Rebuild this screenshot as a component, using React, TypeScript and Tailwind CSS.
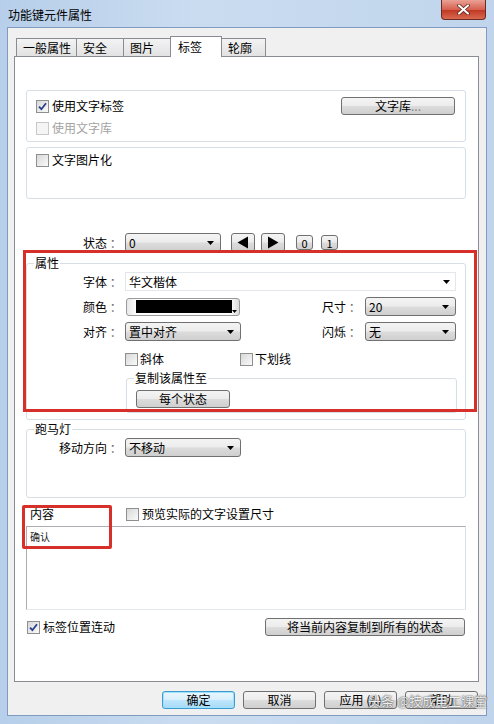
import React from "react";

const btnBg =
  "bg-[linear-gradient(#f4f4f4_0%,#ececec_48%,#dcdcdc_52%,#cfcfcf_100%)]";

const Arrow = () => (
  <svg width="7" height="4" viewBox="0 0 7 4" className="shrink-0">
    <path d="M0 0h7L3.5 4z" fill="#000" />
  </svg>
);

const Check = ({ checked, disabled }: { checked?: boolean; disabled?: boolean }) => (
  <span
    className={`flex h-[13px] w-[13px] shrink-0 items-center justify-center border ${
      disabled
        ? "border-[#c9c9c9] bg-[#f5f5f5]"
        : "border-[#8e8f8f] bg-[linear-gradient(135deg,#d8d8d8,#fafafa)]"
    }`}
  >
    {checked && (
      <svg width="9" height="9" viewBox="0 0 9 9">
        <path d="M1 4.6 L3.4 7.2 L8 1.2" stroke="#283d8c" strokeWidth="1.8" fill="none" />
      </svg>
    )}
  </span>
);

const Btn = ({ className = "", children }: { className?: string; children?: React.ReactNode }) => (
  <div
    className={`flex shrink-0 items-center justify-center rounded-[3px] border border-[#707070] ${btnBg} ${className}`}
  >
    {children}
  </div>
);

const Combo = ({ value, className = "" }: { value: string; className?: string }) => (
  <div
    className={`flex h-[19px] shrink-0 items-center justify-between rounded-[3px] border border-[#707070] pl-[3px] pr-[6px] ${btnBg} ${className}`}
  >
    <span>{value}</span>
    <Arrow />
  </div>
);

const Label = ({ text, className = "w-[42px]" }: { text: string; className?: string }) => (
  <span className={`shrink-0 whitespace-pre ${className}`}>
    {text}
    <span className="text-[#666]"> ：</span>
  </span>
);

const Tab = ({ text, w, active }: { text: string; w: string; active?: boolean }) => (
  <div
    className={`flex items-center border border-[#898c95] ${w} ${
      active
        ? "relative z-10 -mb-px h-[21px] border-b-0 bg-white pl-[7px]"
        : "-ml-px h-[18px] border-b-0 bg-[linear-gradient(#f3f3f3,#e2e2e2)] pl-[6px]"
    }`}
  >
    {text}
  </div>
);

export default function App() {
  return (
    <div className="relative h-[724px] w-[494px] overflow-hidden bg-[linear-gradient(90deg,#b7cfea,#cadcf0_40%,#c0d5ec)] font-['Noto_Sans_CJK_SC',sans-serif] text-[12px] leading-[14px] text-black">
      {/* title bar */}
      <div className="flex h-[27px] items-start justify-between">
        <span className="ml-[8px] mt-[8px]">功能键元件属性</span>
        <div className="mr-[8px] flex h-[20px] w-[45px] items-center justify-center rounded-b-[4px] border border-t-0 border-[#6b2a22] bg-[linear-gradient(#e9a195,#d6614f_50%,#c23a26_55%,#d86a4f)]">
          <svg width="13" height="11" viewBox="0 0 13 11">
            <path d="M2 1.5 L11 9.5 M11 1.5 L2 9.5" stroke="#5a1a12" strokeWidth="3.6" strokeLinecap="round" />
            <path d="M2 1.5 L11 9.5 M11 1.5 L2 9.5" stroke="#fff" strokeWidth="2.2" strokeLinecap="round" />
          </svg>
        </div>
      </div>

      {/* dialog body */}
      <div className="mx-[7px] h-[689px] border border-[#7f9cc0] bg-[#f0f0f0] pt-[8px]">
        <div className="ml-[8px] flex h-[20px] items-end">
          <Tab text="一般属性" w="w-[61px] !ml-0" />
          <Tab text="安全" w="w-[48px]" />
          <Tab text="图片" w="w-[48px]" />
          <Tab text="标签" w="w-[52px] -ml-px" active />
          <Tab text="轮廓" w="w-[45px]" />
        </div>

        <div className="relative ml-[6px] h-[626px] w-[465px] border border-[#898c95] bg-white pl-[11px]">
          {/* group 1 */}
          <div className="mt-[33px] h-[52px] w-[440px] rounded-[3px] border border-[#d5dfe5] pl-[9px] pr-[10px] pt-[6px]">
            <div className="flex h-[18px] items-center justify-between">
              <div className="flex items-center gap-[3px]">
                <Check checked />
                <span>使用文字标签</span>
              </div>
              <Btn className="h-[18px] w-[114px]">
                文字库<span className="text-[#888]">...</span>
              </Btn>
            </div>
            <div className="mt-[4px] flex h-[18px] items-center gap-[3px] text-[#a3a3a3]">
              <Check disabled />
              <span>使用文字库</span>
            </div>
          </div>

          {/* group 2 */}
          <div className="mt-[5px] h-[52px] w-[440px] rounded-[3px] border border-[#d5dfe5] pl-[9px] pt-[3px]">
            <div className="flex h-[18px] items-center gap-[3px]">
              <Check />
              <span>文字图片化</span>
            </div>
          </div>

          {/* state row */}
          <div className="mt-[34px] flex h-[19px] items-center pl-[57px]">
            <Label text="状态" />
            <Combo value="0" className="w-[96px]" />
            <Btn className="ml-[10px] h-[19px] w-[24px]">
              <svg width="12" height="13" viewBox="0 0 12 13">
                <path d="M11 0.5v12L0.5 6.5z" fill="#000" />
              </svg>
            </Btn>
            <Btn className="ml-[6px] h-[19px] w-[24px]">
              <svg width="12" height="13" viewBox="0 0 12 13">
                <path d="M1 0.5v12L11.5 6.5z" fill="#000" />
              </svg>
            </Btn>
            <Btn className="ml-[11px] h-[15px] w-[17px] rounded-[2px] text-[11px]">0</Btn>
            <Btn className="ml-[8px] h-[15px] w-[17px] rounded-[2px] text-[11px]">1</Btn>
          </div>

          {/* properties */}
          <fieldset className="mt-[4px] w-[440px] rounded-[3px] border border-[#d5dfe5] pb-[6px]">
            <legend className="ml-[7px] px-[1px]">属性</legend>
            <div className="mt-[2px] flex h-[19px] items-center pl-[56px]">
              <Label text="字体" />
              <div className="flex h-[19px] w-[331px] items-center justify-between border border-[#e3e6ea] bg-white pl-[3px] pr-[5px]">
                <span>华文楷体</span>
                <Arrow />
              </div>
            </div>
            <div className="mt-[6px] flex h-[19px] items-center pl-[56px]">
              <Label text="颜色" />
              <div className="relative ml-[1px] flex h-[18px] w-[114px] items-center rounded-[3px] border border-[#9a9a9a] bg-[linear-gradient(90deg,#e8e8e8,#fdfdfd_8%,#fdfdfd_92%,#dcdcdc)] pl-[9px]">
                <div className="h-[13px] w-[96px] bg-black" />
                <svg width="5" height="3" viewBox="0 0 5 3" className="absolute bottom-[2px] right-[2px]">
                  <path d="M0 0h5L2.5 3z" fill="#000" />
                </svg>
              </div>
              <span className="ml-[82px]">
                <Label text="尺寸" className="inline-block w-[43px]" />
              </span>
              <Combo value="20" className="w-[91px]" />
            </div>
            <div className="mt-[6px] flex h-[19px] items-center pl-[56px]">
              <Label text="对齐" />
              <Combo value="置中对齐" className="w-[116px]" />
              <span className="ml-[81px]">
                <Label text="闪烁" className="inline-block w-[43px]" />
              </span>
              <Combo value="无" className="w-[91px]" />
            </div>
            <div className="mt-[9px] flex h-[18px] items-center pl-[98px]">
              <div className="flex w-[115px] items-center gap-[2px]">
                <Check />
                <span>斜体</span>
              </div>
              <div className="flex items-center gap-[2px]">
                <Check />
                <span>下划线</span>
              </div>
            </div>
            <fieldset className="ml-[99px] mt-[3px] w-[331px] rounded-[3px] border border-[#d5dfe5] pb-[4px]">
              <legend className="ml-[7px] px-[1px]">复制该属性至</legend>
              <Btn className="ml-[9px] mt-[5px] h-[18px] w-[94px]">每个状态</Btn>
            </fieldset>
          </fieldset>

          {/* marquee */}
          <fieldset className="mt-[2px] h-[76px] w-[440px] rounded-[3px] border border-[#d5dfe5]">
            <legend className="ml-[7px] px-[1px]">跑马灯</legend>
            <div className="mt-[2px] flex h-[19px] items-center pl-[32px]">
              <Label text="移动方向" className="w-[66px]" />
              <Combo value="不移动" className="w-[116px]" />
            </div>
          </fieldset>

          {/* content */}
          <div className="mt-[7px] flex h-[18px] items-center pl-[4px]">
            <span className="w-[96px]">内容</span>
            <div className="flex items-center gap-[3px]">
              <Check />
              <span>预览实际的文字设置尺寸</span>
            </div>
          </div>
          <div className="mt-[3px] h-[84px] w-[440px] border border-[#abadb3] border-b-[#e3e9ef] border-r-[#dbdfe6] pl-[3px] pt-[4px] text-[10px] leading-[12px] text-[#222]">
            确认
          </div>
          <div className="mt-[8px] flex h-[18px] w-[440px] items-center justify-between pl-[1px] pr-[1px]">
            <div className="flex items-center gap-[3px]">
              <Check checked />
              <span>标签位置连动</span>
            </div>
            <Btn className="h-[18px] w-[200px]">将当前内容复制到所有的状态</Btn>
          </div>

          {/* annotation boxes */}
          <div className="absolute left-[8px] top-[193px] h-[162px] w-[454px] border-[3px] border-[#d7302a]" />
          <div className="absolute left-[7px] top-[448px] h-[44px] w-[90px] rounded-[2px] border-[3px] border-[#d7302a]" />
        </div>

        {/* dialog buttons */}
        <div className="mt-[9px] flex justify-end gap-[8px] pr-[8px]">
          <div className="flex h-[18px] w-[73px] items-center justify-center rounded-[3px] border border-[#3c9ad0] bg-[linear-gradient(#eaf6fd_0%,#d9f0fc_48%,#bee6fd_52%,#a7d9f5_100%)] shadow-[inset_0_0_0_1px_#9ee3fb]">
            确定
          </div>
          <Btn className="h-[18px] w-[73px]">取消</Btn>
          <Btn className="h-[18px] w-[73px]">应用 (A)</Btn>
          <Btn className="h-[18px] w-[73px]">帮助</Btn>
        </div>
      </div>

      {/* watermark */}
      <div className="absolute left-[368px] top-[692px] whitespace-nowrap text-[13px] leading-[18px] text-white/90 [text-shadow:0_0_2px_#555,0_0_1px_#333]">
        头条 @技成电工课堂
      </div>
    </div>
  );
}
